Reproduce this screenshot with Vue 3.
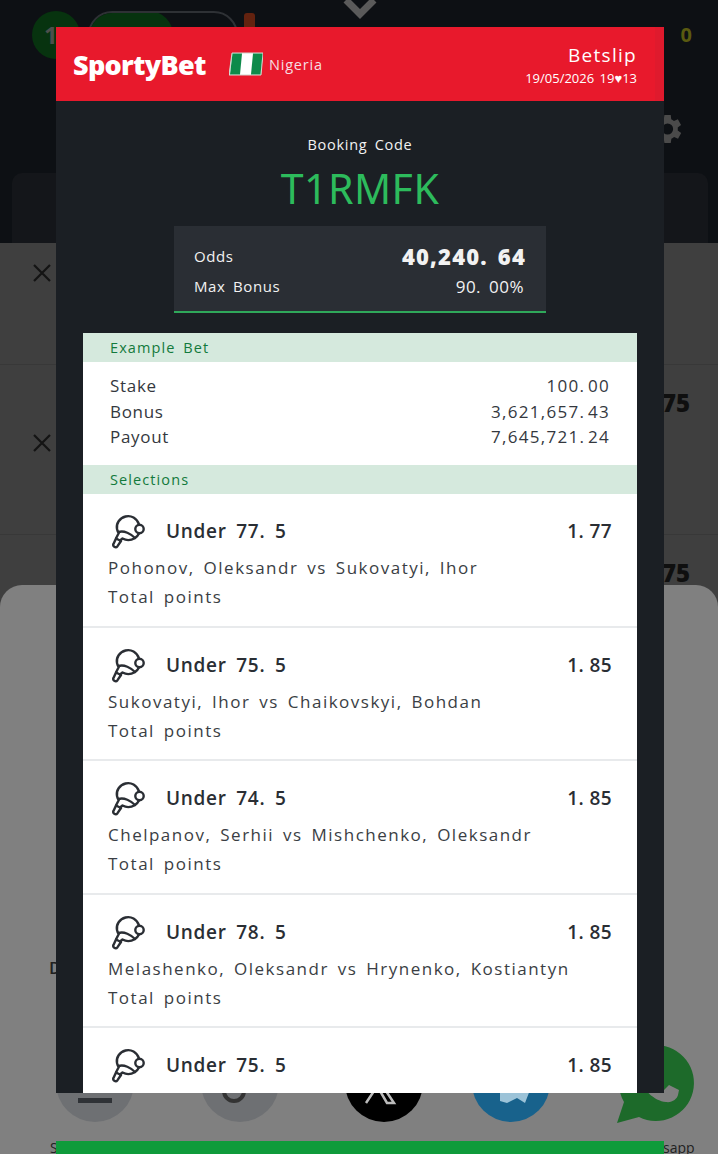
<script setup>
const summary = [
  { label: 'Stake', value: '100. 00' },
  { label: 'Bonus', value: '3,621,657. 43' },
  { label: 'Payout', value: '7,645,721. 24' }
]

const selections = [
  { pick: 'Under 77. 5', odds: '1. 77', match: 'Pohonov, Oleksandr vs Sukovatyi, Ihor' },
  { pick: 'Under 75. 5', odds: '1. 85', match: 'Sukovatyi, Ihor vs Chaikovskyi, Bohdan' },
  { pick: 'Under 74. 5', odds: '1. 85', match: 'Chelpanov, Serhii vs Mishchenko, Oleksandr' },
  { pick: 'Under 78. 5', odds: '1. 85', match: 'Melashenko, Oleksandr vs Hrynenko, Kostiantyn' },
  // last row is cut by the modal, only the pick shows
  { pick: 'Under 75. 5', odds: '1. 85' }
]
</script>

<template>
  <div class="page">
    <!-- dimmed app behind the modal -->
    <header class="top">
      <div class="top-row">
        <span class="num-badge">1</span>
        <div class="pill-track"><span class="pill-fill"></span></div>
        <span class="bottle"></span>
        <span class="zero">0</span>
      </div>
      <div class="gear-row">
        <svg class="gear" width="38" height="38" viewBox="0 0 24 24">
          <path fill="#4a4a4a" d="M19.4 13a7.6 7.6 0 0 0 0-2l2.100-1.600-2-3.500-2.500 1a7.500 7.500 0 0 0-1.700-1L15 3.200h-4l-.4 2.700a7.500 7.500 0 0 0-1.700 1l-2.500-1-2 3.500L6.500 11a7.600 7.600 0 0 0 0 2l-2.100 1.600 2 3.500 2.500-1a7.500 7.500 0 0 0 1.700 1l.4 2.700h4l.4-2.700a7.500 7.500 0 0 0 1.700-1l2.500 1 2-3.500zM13 15.500a3.500 3.500 0 1 1 0-7 3.500 3.500 0 0 1 0 7z"/>
        </svg>
      </div>
      <div class="top-card"></div>
    </header>

    <section class="list">
      <div class="list-row first">
        <svg class="close" width="20" height="20" viewBox="0 0 20 20"><path d="M2 2l16 16M18 2L2 18" stroke="#141414" stroke-width="2.200"/></svg>
      </div>
      <div class="list-row">
        <svg class="close" width="20" height="20" viewBox="0 0 20 20"><path d="M2 2l16 16M18 2L2 18" stroke="#141414" stroke-width="2.200"/></svg>
        <span class="row-odds">75</span>
      </div>
      <div class="list-row last">
        <span class="row-odds">75</span>
      </div>
    </section>

    <svg class="chevron" width="34" height="20" viewBox="0 0 34 20"><path d="M3 0l14 14L31 0" fill="none" stroke="#5a5a5a" stroke-width="7"/></svg>

    <section class="sheet">
      <span class="sheet-d">D</span>
      <div class="share">
        <div class="share-item" style="--x:95px">
          <span class="circle grey"><i class="dash"></i></span>
          <span class="share-label left-label">S</span>
        </div>
        <div class="share-item" style="--x:240px">
          <span class="circle grey">
            <svg width="40" height="40" viewBox="0 0 40 40"><circle cx="14" cy="25" r="10" fill="none" stroke="#333" stroke-width="4"/></svg>
          </span>
        </div>
        <div class="share-item" style="--x:384px">
          <span class="circle black">
            <svg width="40" height="40" viewBox="0 0 40 40"><path d="M2 37L18 13M14 13l16 24h-7L9 13z" fill="none" stroke="#bbb" stroke-width="2.500"/></svg>
          </span>
        </div>
        <div class="share-item" style="--x:511px">
          <span class="circle blue">
            <svg width="40" height="40" viewBox="0 0 40 40"><path d="M9 24H39L34 37l-8-5-10 5-7-2z" fill="#9cc3d8"/></svg>
          </span>
        </div>
        <div class="share-item" style="--x:656px">
          <svg class="whatsapp" width="82" height="82" viewBox="0 0 82 82">
            <path fill="#1d6a2a" d="M41 2a38 38 0 0 0-33 57L1 80l22-6A38 38 0 1 0 41 2z"/>
            <path fill="#808080" d="M30 22c-3 1-7 6-6 13 2 11 14 23 26 24 6 1 11-3 12-7l1-5-10-5-5 5c-5-2-11-8-13-13l4-5-4-10z"/>
          </svg>
          <span class="share-label right-label">sapp</span>
        </div>
      </div>
    </section>

    <!-- betslip modal -->
    <article class="modal">
      <header class="modal-head">
        <div class="brand">
          <span class="logo">SportyBet</span>
          <svg class="flag" width="34" height="24" viewBox="0 0 34 24">
            <path d="M3 1h31l-2 22H0z" fill="#fff" stroke="#cfd8cf" stroke-width="1"/>
            <path d="M3.500 1.500h9.500l-2 21H1z" fill="#0d8a4a"/>
            <path d="M24 1.500h9.500l-2 21H22z" fill="#0d8a4a"/>
          </svg>
          <span class="country">Nigeria</span>
        </div>
        <div class="slip">
          <span class="slip-title">Betslip</span>
          <span class="slip-date">19/05/2026 19♥13</span>
        </div>
      </header>

      <div class="booking">
        <p class="booking-label">Booking Code</p>
        <p class="booking-code">T1RMFK</p>
        <div class="stats">
          <div class="stats-row">
            <span>Odds</span>
            <strong class="stats-odds">40,240. 64</strong>
          </div>
          <div class="stats-row">
            <span>Max Bonus</span>
            <span class="stats-bonus">90. 00%</span>
          </div>
        </div>
      </div>

      <div class="panel">
        <div class="band">Example Bet</div>
        <div class="summary">
          <div v-for="row in summary" :key="row.label" class="summary-row">
            <span>{{ row.label }}</span>
            <span class="summary-value">{{ row.value }}</span>
          </div>
        </div>
        <div class="band">Selections</div>
        <div v-for="(sel, i) in selections" :key="i" class="selection">
          <div class="sel-top">
            <svg class="paddle" width="36" height="36" viewBox="0 0 36 36" fill="none" stroke="#2a2e34" stroke-width="2.400" stroke-linejoin="round" stroke-linecap="round">
              <path d="M28 11.500C26 5 20 2 14.500 3.500 8.500 5 5 10.500 6 16c.3 1.800 1 3 1.800 4l-2.600 5"/>
              <path d="M7.500 19C13 17 20 21 24 25c-4 2.500-9 2.500-12.500.5L9 27.500"/>
              <path d="M24 25c1.500-1 3-2.500 4-4.500"/>
              <circle cx="28.500" cy="16" r="4.200"/>
              <path d="M5 25.500l5 2.500-3.500 5.200c-.8 1-2.200 1.200-3.200.5s-1.300-2-.7-3z"/>
            </svg>
            <span class="sel-pick">{{ sel.pick }}</span>
            <span class="sel-odds">{{ sel.odds }}</span>
          </div>
          <template v-if="sel.match">
            <p class="sel-match">{{ sel.match }}</p>
            <p class="sel-market">Total points</p>
          </template>
        </div>
      </div>
    </article>

    <div class="action-bar"></div>
  </div>
</template>

<style scoped>
.page {
  position: relative;
  width: 718px;
  height: 1154px;
  overflow: hidden;
  background: #3f3f3f;
  font-family: "Open Sans", "Noto Sans", sans-serif;
}

.top {
  height: 243px;
  background: #0d1014;
  display: flex;
  flex-direction: column;
}

.top-row {
  height: 62px;
  padding: 11px 26px 0 32px;
  box-sizing: border-box;
  display: flex;
  align-items: flex-start;
}

.num-badge {
  width: 48px;
  height: 48px;
  border-radius: 50%;
  background: #07330f;
  color: #4c4f4c;
  font-size: 24px;
  font-weight: 700;
  line-height: 48px;
  text-indent: 12px;
}

.pill-track {
  margin-left: 8px;
  width: 150px;
  height: 48px;
  box-sizing: border-box;
  border: 2px solid #2e3135;
  border-radius: 24px;
  overflow: hidden;
}

.pill-fill {
  display: block;
  width: 85px;
  height: 48px;
  margin: -2px;
  background: #07330f;
  border-radius: 24px;
}

.bottle {
  width: 11px;
  height: 18px;
  margin: 2px 0 0 6px;
  background: #63220f;
  border-radius: 3px 3px 2px 2px;
}

.zero {
  margin-left: auto;
  margin-top: 10px;
  color: #5a5a10;
  font-size: 20px;
  font-weight: 700;
}

.gear-row {
  height: 38px;
  padding-right: 33px;
  display: flex;
  justify-content: flex-end;
  margin-top: 48px;
  margin-bottom: 25px;
}

.top-card {
  flex: 1;
  margin: 0 10px 0 12px;
  background: #14161a;
  border-radius: 10px 10px 0 0;
}

.list-row {
  height: 170px;
  padding: 0 28px 0 32px;
  box-sizing: border-box;
  display: flex;
  align-items: flex-start;
  justify-content: space-between;
  border-bottom: 1px solid #383838;
}

.list-row.first {
  height: 122px;
  padding-top: 20px;
}

.list-row.last {
  border-bottom: none;
}

.list-row:not(.first) .close {
  margin-top: 68px;
}

.row-odds {
  margin-left: auto;
  margin-top: 20px;
  color: #0f0f0f;
  font-size: 24px;
  font-weight: 800;
  line-height: 36px;
}

.chevron {
  position: absolute;
  top: 0;
  left: 343px;
}

.sheet {
  position: absolute;
  left: 0;
  right: 0;
  top: 585px;
  bottom: 0;
  background: #808080;
  border-radius: 22px 22px 0 0;
}

.sheet-d {
  position: absolute;
  left: 49px;
  top: 371px;
  color: #202020;
  font-size: 17px;
  font-weight: 600;
}

.share-item {
  position: absolute;
  top: 459px;
  left: calc(var(--x) - 39px);
  width: 78px;
}

.circle {
  display: flex;
  align-items: flex-end;
  justify-content: center;
  width: 78px;
  height: 78px;
  border-radius: 50%;
  overflow: hidden;
}

.circle.grey {
  background: #6e7073;
}

.circle.black {
  background: #000;
}

.circle.blue {
  background: #18628c;
}

.circle svg {
  margin-bottom: 16px;
}

.dash {
  width: 34px;
  height: 5px;
  margin-bottom: 19px;
  background: #2f3236;
}

.whatsapp {
  margin: -1px 0 0 -1px;
}

.share-label {
  position: absolute;
  top: 94px;
  color: #222;
  font-size: 14px;
  white-space: nowrap;
}

.left-label {
  left: -6px;
}

.right-label {
  left: 46px;
}

.modal {
  position: absolute;
  left: 56px;
  top: 27px;
  width: 608px;
  height: 1066px;
  background: #1b1f24;
  display: flex;
  flex-direction: column;
  overflow: hidden;
}

.modal-head {
  height: 74px;
  flex: none;
  padding: 0 27px 0 17px;
  box-sizing: border-box;
  background: linear-gradient(to right, #e8192c 599px, #df1a2d 599px);
  color: #fff;
  display: flex;
  justify-content: space-between;
  align-items: center;
}

.brand {
  display: flex;
  align-items: center;
}

.logo {
  font-family: "Open Sans", sans-serif;
  font-size: 27px;
  font-weight: 800;
  letter-spacing: -0.700px;
  width: 140px;
  white-space: nowrap;
}

.flag {
  margin: 0 6px 0 16px;
}

.country {
  font-size: 14.500px;
  letter-spacing: 0.800px;
  color: #f6dfe2;
}

.slip {
  display: flex;
  flex-direction: column;
  align-items: flex-end;
  padding-top: 2px;
}

.slip-title {
  font-size: 19px;
  line-height: 26px;
  letter-spacing: 1.300px;
}

.slip-date {
  font-size: 13px;
  line-height: 20px;
  word-spacing: 2px;
}

.booking {
  flex: none;
  height: 232px;
  box-sizing: border-box;
  padding-top: 32px;
  display: flex;
  flex-direction: column;
  align-items: center;
  color: #f2f2f2;
}

.booking-label {
  margin: 0;
  font-size: 14.500px;
  line-height: 24px;
  letter-spacing: 0.700px;
  word-spacing: 3px;
}

.booking-code {
  margin: 6px 0 0;
  font-family: "Noto Sans", sans-serif;
  font-size: 41px;
  line-height: 50px;
  color: #2dbb5c;
  letter-spacing: 0.500px;
}

.stats {
  margin-top: 13px;
  width: 372px;
  height: 87px;
  box-sizing: border-box;
  padding: 14px 20px 0;
  background: #2a2e34;
  border-bottom: 2px solid #2fa85a;
  font-size: 15px;
  letter-spacing: 0.600px;
  word-spacing: 3px;
}

.stats-row {
  display: flex;
  justify-content: space-between;
  align-items: center;
  height: 32px;
}

.stats-row + .stats-row {
  height: 28px;
}

.stats-odds {
  font-size: 22px;
  font-weight: 800;
  letter-spacing: 1.200px;
}

.stats-bonus {
  font-size: 17px;
  letter-spacing: 0.500px;
  padding-right: 2px;
}

.panel {
  flex: 1;
  min-height: 0;
  margin: 0 27px;
  background: #fff;
  color: #2a2e34;
  overflow: hidden;
}

.band {
  height: 29px;
  padding-left: 27px;
  background: #d5e9dd;
  color: #137a3c;
  font-size: 14.500px;
  line-height: 29px;
  letter-spacing: 1.100px;
  word-spacing: 3px;
}

.summary {
  height: 103px;
  box-sizing: border-box;
  padding: 11px 27px 0;
  font-size: 17px;
  letter-spacing: 0.700px;
  color: #34383e;
}

.summary-row {
  display: flex;
  justify-content: space-between;
  height: 25.500px;
  line-height: 25.500px;
}

.summary-value {
  letter-spacing: 1.300px;
  word-spacing: -3px;
}

.selection {
  height: 133.500px;
  box-sizing: border-box;
  padding: 19px 25px 0;
  border-bottom: 2px solid #e8eaec;
}

.sel-top {
  display: flex;
  align-items: center;
  height: 36px;
}

.paddle {
  margin: 0 19px 0 3px;
  flex: none;
}

.sel-pick {
  font-size: 19px;
  font-weight: 600;
  letter-spacing: 0.700px;
  word-spacing: 4px;
}

.sel-odds {
  margin-left: auto;
  font-size: 19px;
  font-weight: 600;
  letter-spacing: 0.400px;
}

.sel-match,
.sel-market {
  margin: 0;
  font-size: 17px;
  line-height: 29px;
  letter-spacing: 1.500px;
  word-spacing: 3px;
  color: #3a3e44;
  white-space: nowrap;
}

.sel-match {
  margin-top: 4px;
}

.action-bar {
  position: absolute;
  left: 56px;
  top: 1141px;
  width: 608px;
  height: 13px;
  background: #0f9b3b;
}
</style>

<style>
html,
body {
  margin: 0;
  background: #0d1014;
}
</style>
